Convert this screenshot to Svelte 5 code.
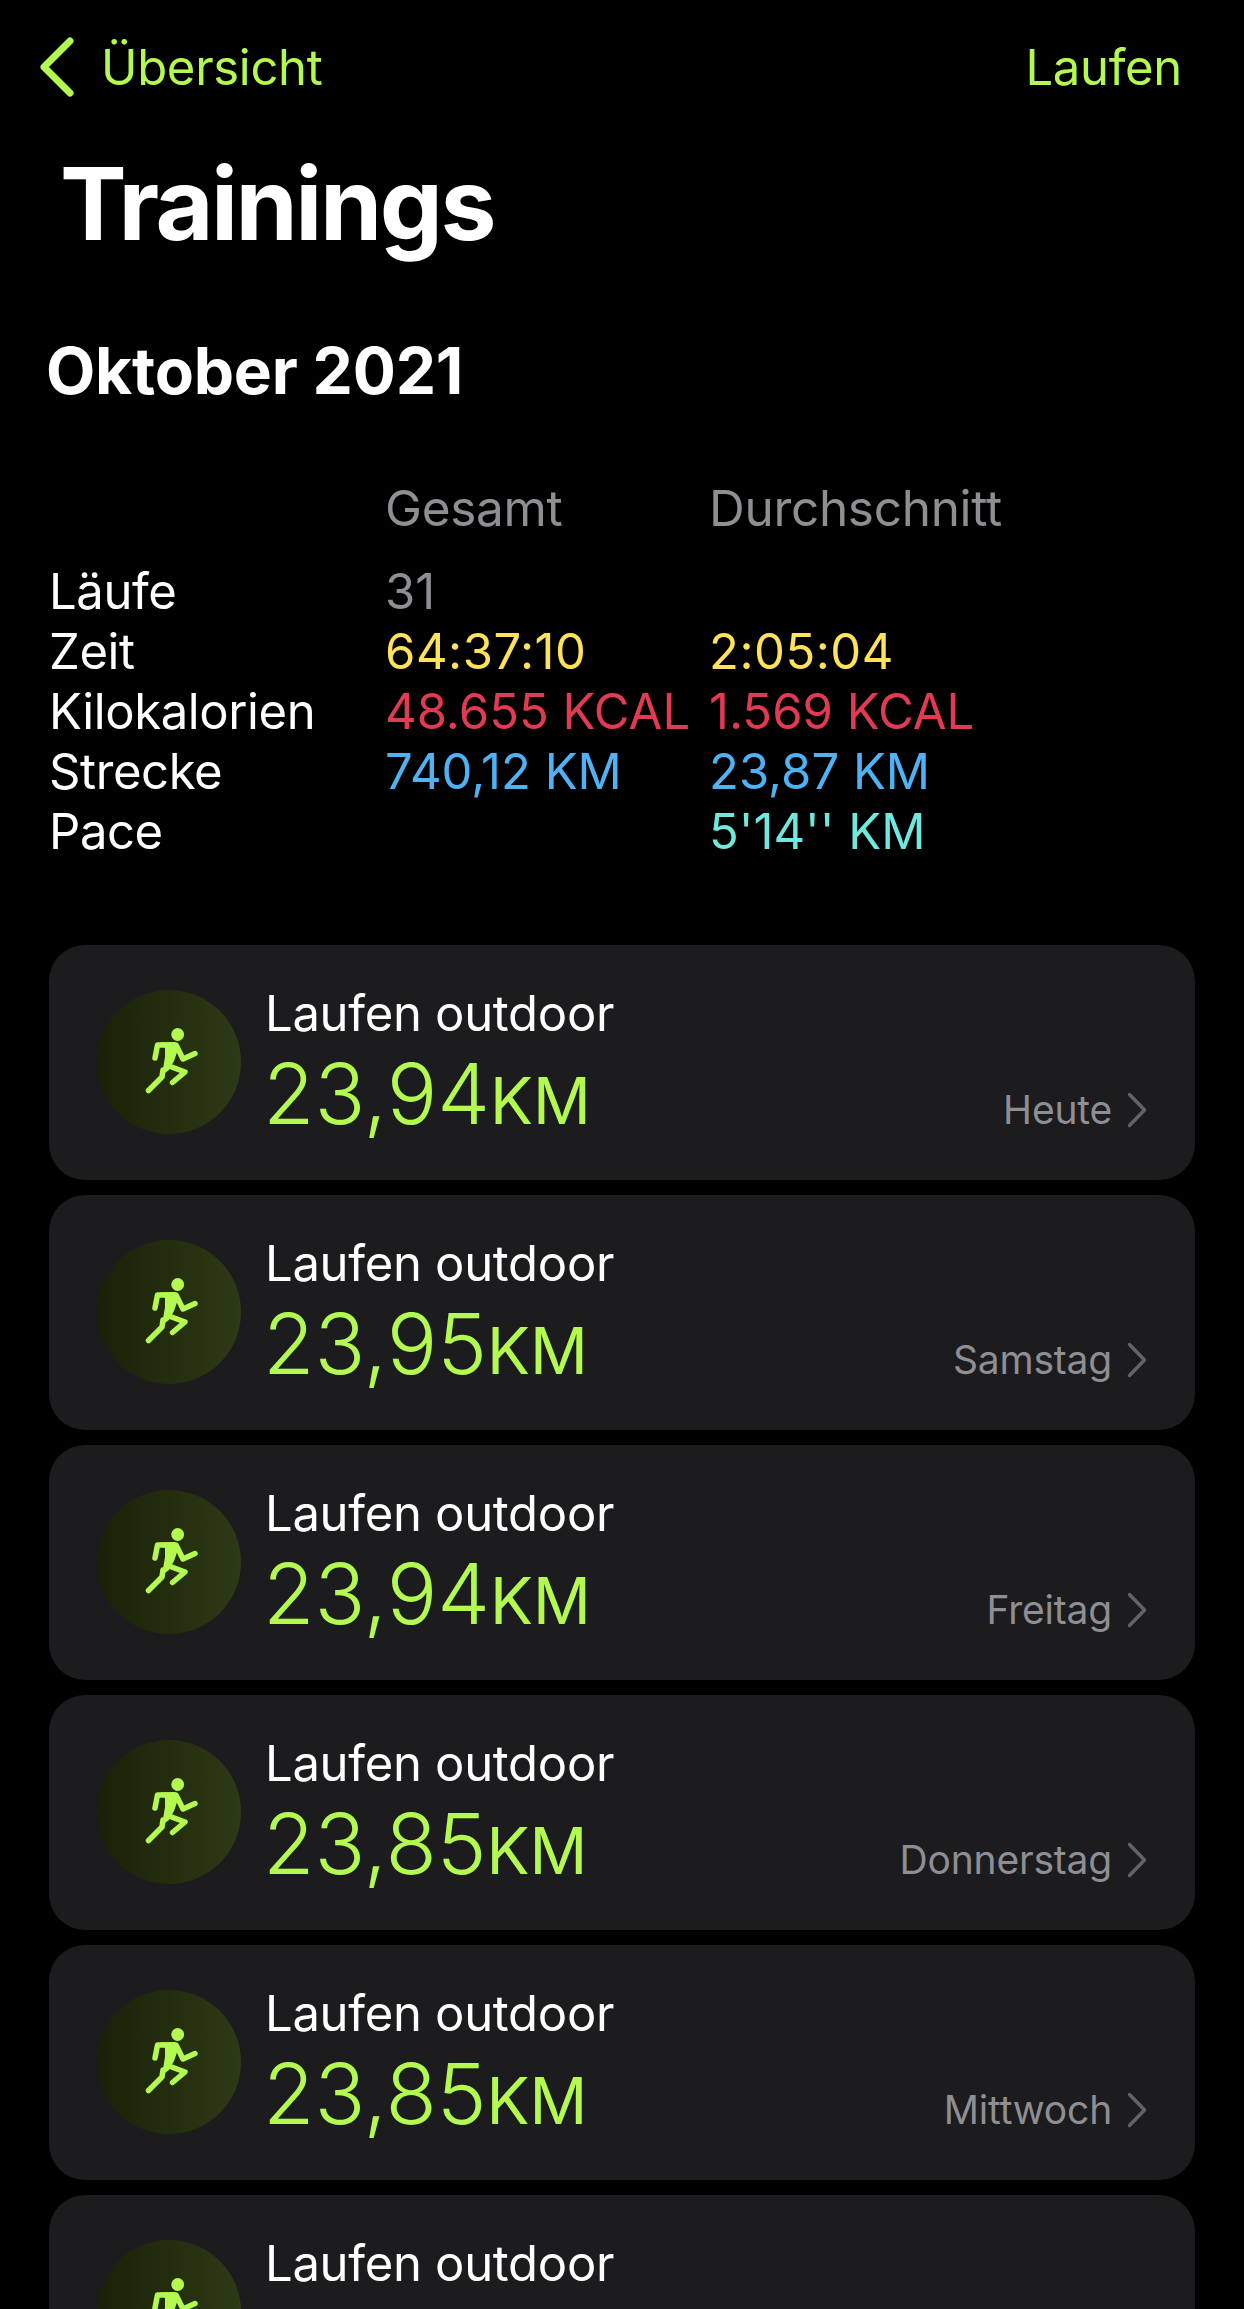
<script>
  const rows = [
    { label: 'Läufe', total: '31', avg: '', tone: 'gray' },
    { label: 'Zeit', total: '64:37:10', avg: '2:05:04', tone: 'yellow' },
    { label: 'Kilokalorien', total: '48.655 KCAL', avg: '1.569 KCAL', tone: 'red' },
    { label: 'Strecke', total: '740,12 KM', avg: '23,87 KM', tone: 'blue' },
    { label: 'Pace', total: '', avg: "5'14'' KM", tone: 'teal' }
  ];
  const runs = [
    { km: '23,94', day: 'Heute' },
    { km: '23,95', day: 'Samstag' },
    { km: '23,94', day: 'Freitag' },
    { km: '23,85', day: 'Donnerstag' },
    { km: '23,85', day: 'Mittwoch' },
    { km: '', day: '' }
  ];
</script>

<main class="page">
  <nav class="nav">
    <span class="back">
      <svg class="back-icon" width="36" height="60" viewBox="0 0 36 60" aria-hidden="true">
        <path d="M31 4 L5 30 L31 56" />
      </svg>
      Übersicht
    </span>
    <span>Laufen</span>
  </nav>

  <h1>Trainings</h1>
  <h2>Oktober 2021</h2>

  <section class="stats">
    <div class="head"></div>
    <div class="head">Gesamt</div>
    <div class="head">Durchschnitt</div>
    {#each rows as row}
      <div class="label">{row.label}</div>
      <div class={row.tone}>{row.total}</div>
      <div class={row.tone}>{row.avg}</div>
    {/each}
  </section>

  <section class="list">
    {#each runs as run}
      <article class="card">
        <div class="avatar">
          <svg width="98" height="98" viewBox="0 12 98 98" aria-hidden="true">
            <circle class="fill" cx="57.7" cy="33.5" r="6.4" />
            <path class="fill" d="M40 41.5 L55 41 L58.5 47 L54 60 L49 69 L42 74 L45 56 L45 47 Z" />
            <path class="limb" d="M35 57 L37.5 44 L56 44 L63 58 L75 52.5" />
            <path class="limb" d="M43 69 L42 76 L28.5 89.5" />
            <path class="limb" d="M49 65 L65 71 L52.5 81.5" />
          </svg>
        </div>
        <div class="info">
          <div class="type">Laufen outdoor</div>
          {#if run.km}
            <div class="dist">{run.km}<span class="unit">KM</span></div>
          {/if}
        </div>
        {#if run.day}
          <div class="day">
            {run.day}
            <svg width="20" height="36" viewBox="0 0 20 36" aria-hidden="true">
              <path d="M2.5 2.5 L17.5 18 L2.5 33.5" />
            </svg>
          </div>
        {/if}
      </article>
    {/each}
  </section>
</main>

<style>
  :global(body) {
    margin: 0;
    background: #000;
  }
  .page {
    height: 2309px;
    overflow: hidden;
    background: #000;
    color: #fff;
    font-family: Inter, "Liberation Sans", sans-serif;
    font-size: 49px;
    box-sizing: border-box;
  }
  .nav {
    display: flex;
    justify-content: space-between;
    align-items: center;
    color: #b4f950;
    height: 60px;
    padding: 37px 62px 0 39px;
    font-size: 49px;
    font-weight: 400;
    letter-spacing: -0.3px;
  }
  .back {
    display: flex;
    align-items: center;
    gap: 26px;
  }
  .back-icon path {
    fill: none;
    stroke: #b4f950;
    stroke-width: 7;
    stroke-linecap: round;
    stroke-linejoin: round;
  }
  h1 {
    margin: 52px 0 0 60px;
    font-size: 100px;
    line-height: 110px;
    font-weight: 700;
    letter-spacing: -2.5px;
  }
  h2 {
    margin: 74px 0 0 46px;
    font-size: 64px;
    line-height: 76px;
    font-weight: 700;
    letter-spacing: -0.2px;
  }
  .stats {
    display: grid;
    grid-template-columns: 336px 324px 1fr;
    grid-template-rows: 84px;
    grid-auto-rows: 60px;
    margin: 69px 0 0 49px;
    font-weight: 400;
    letter-spacing: 0;
    line-height: 60px;
  }
  .label { letter-spacing: -0.4px; }
  .head {
    color: #8e8e93;
    font-size: 49.5px;
    letter-spacing: -0.3px;
  }
  .gray { color: #8e8e93; }
  .yellow { color: #fde25a; letter-spacing: 0.5px; }
  .red { color: #e23a52; }
  .blue { color: #4fb2f5; }
  .teal { color: #6fe8df; }
  .list {
    display: flex;
    flex-direction: column;
    gap: 15px;
    margin: 83px 49px 0;
  }
  .card {
    display: flex;
    align-items: flex-start;
    height: 235px;
    flex: none;
    padding: 45px 48px 0;
    box-sizing: border-box;
    border-radius: 36px;
    background: #1c1c1e;
  }
  .avatar {
    width: 144px;
    height: 144px;
    flex: none;
    border-radius: 50%;
    display: flex;
    align-items: center;
    justify-content: center;
    background: linear-gradient(90deg, #1a2107, #2d3a16);
  }
  .avatar svg { display: block; }
  .fill { fill: #b4f950; }
  .limb {
    fill: none;
    stroke: #b4f950;
    stroke-width: 5.5;
    stroke-linecap: round;
    stroke-linejoin: round;
  }
  .info {
    margin-left: 24px;
    margin-top: -6px;
  }
  .type {
    font-weight: 400;
    line-height: 60px;
    letter-spacing: -0.3px;
  }
  .dist {
    color: #b4f950;
    font-size: 84px;
    font-weight: 300;
    line-height: 88px;
    letter-spacing: 0;
    margin-top: 6px;
    margin-left: -2px;
  }
  .unit {
    font-size: 64px;
    font-weight: 400;
    letter-spacing: 0;
  }
  .day {
    display: flex;
    align-items: center;
    gap: 15px;
    margin-left: auto;
    margin-top: 97px;
    color: #8e8e93;
    font-size: 39px;
    font-weight: 400;
    line-height: 46px;
    letter-spacing: -0.2px;
  }
  .day svg path {
    fill: none;
    stroke: #636366;
    stroke-width: 3.5;
    stroke-linecap: round;
    stroke-linejoin: round;
  }
</style>
